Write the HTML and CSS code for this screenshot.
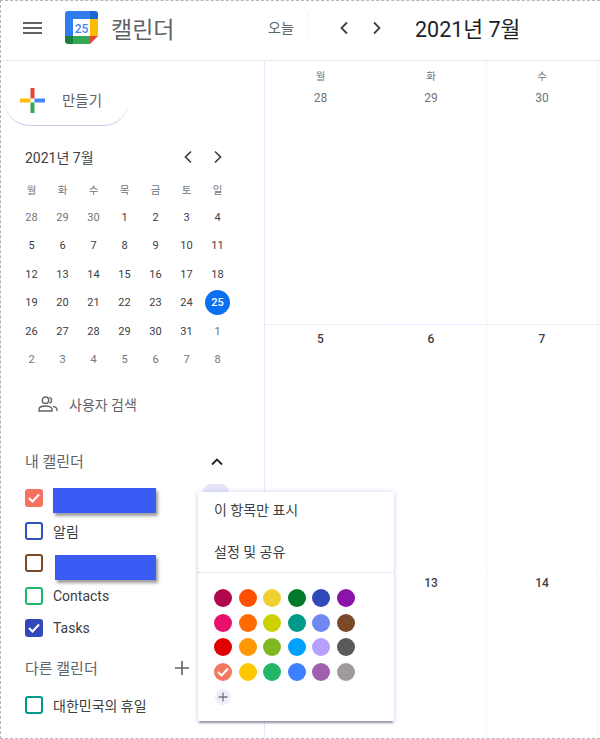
FILE: index.html
```html
<!DOCTYPE html>
<html lang="ko">
<head>
  <meta charset="utf-8">
  <title>캘린더</title>
  <link rel="stylesheet" href="styles.css">
</head>

<body>
  <div class="page">
    <header class="topbar">
      <svg class="menu-icon" viewBox="0 0 19 12"><path d="M0 1h19M0 6h19M0 11h19" stroke="#5f6368" stroke-width="2"/></svg>
      <svg class="logo" viewBox="0 0 33 33">
        <path d="M3 0h22v8H8v17H0V3a3 3 0 0 1 3-3z" fill="#2f7bf0"/>
        <path d="M25 0h5a3 3 0 0 1 3 3v5h-8z" fill="#1967d2"/>
        <path d="M25 8h8v17h-8z" fill="#fbbc04"/>
        <path d="M8 25h17v8H8z" fill="#34a853"/>
        <path d="M0 25h8v8H3a3 3 0 0 1-3-3z" fill="#188038"/>
        <path d="M25 25h8l-8 8z" fill="#ea4335"/>
        <path d="M8 8h17v17H8z" fill="#fff"/>
        <text x="16.5" y="21.5" class="logo-num">25</text>
      </svg>
      <span class="app-name">캘린더</span>
      <span class="today">오늘</span>
      <svg class="top-arrow" viewBox="0 0 10 14"><path d="M8 1.5 2.500 7 8 12.500" fill="none" stroke="#3c4043" stroke-width="1.8"/></svg>
      <svg class="top-arrow next" viewBox="0 0 10 14"><path d="M2 1.5 7.500 7 2 12.500" fill="none" stroke="#3c4043" stroke-width="1.8"/></svg>
      <span class="month-title">2021년 7월</span>
    </header>

    <div class="content">
      <aside class="sidebar">
        <button class="create-btn" type="button">
          <svg class="create-plus" viewBox="0 0 25 25">
            <path d="M10.5 0h4v10.500h-4z" fill="#ea4335"/>
            <path d="M14.5 10.5H25v4H14.500z" fill="#4285f4"/>
            <path d="M10.5 14.5h4V25h-4z" fill="#34a853"/>
            <path d="M0 10.5h10.500v4H0z" fill="#fbbc04"/>
          </svg>
          <span>만들기</span>
        </button>

        <div class="mini-head">
          <span class="mini-title">2021년 7월</span>
          <svg class="mini-arrow" viewBox="0 0 10 14"><path d="M8 1.5 2.500 7 8 12.500" fill="none" stroke="#3c4043" stroke-width="1.7"/></svg>
          <svg class="mini-arrow" viewBox="0 0 10 14"><path d="M2 1.5 7.500 7 2 12.500" fill="none" stroke="#3c4043" stroke-width="1.7"/></svg>
        </div>

        <div class="mini-grid">
          <span class="dow">월</span><span class="dow">화</span><span class="dow">수</span><span class="dow">목</span><span class="dow">금</span><span class="dow">토</span><span class="dow">일</span>
          <span class="off">28</span><span class="off">29</span><span class="off">30</span><span>1</span><span>2</span><span>3</span><span>4</span>
          <span>5</span><span>6</span><span>7</span><span>8</span><span>9</span><span>10</span><span>11</span>
          <span>12</span><span>13</span><span>14</span><span>15</span><span>16</span><span>17</span><span>18</span>
          <span>19</span><span>20</span><span>21</span><span>22</span><span>23</span><span>24</span><span class="selected"><b>25</b></span>
          <span>26</span><span>27</span><span>28</span><span>29</span><span>30</span><span>31</span><span class="off">1</span>
          <span class="off">2</span><span class="off">3</span><span class="off">4</span><span class="off">5</span><span class="off">6</span><span class="off">7</span><span class="off">8</span>
        </div>

        <div class="people-search">
          <svg class="people-icon" viewBox="0 0 20 16"><g fill="none" stroke="#5f6368" stroke-width="1.4"><circle cx="7.500" cy="4.200" r="3.200"/><path d="M1 15v-1.600C1 11.200 4 10 7.500 10s6.500 1.200 6.500 3.400V15z"/><path d="M11.500 1.200a3.200 3.200 0 0 1 0 6M15 10.400c2.300.5 4 1.500 4 3V15"/></g></svg>
          <span>사용자 검색</span>
        </div>

        <div class="section-head my-head">
          <span>내 캘린더</span>
          <svg class="collapse-icon" viewBox="0 0 12 8"><path d="M1 6.500 6 1.500l5 5" fill="none" stroke="#202124" stroke-width="1.8"/></svg>
        </div>

        <ul class="cal-list">
          <li><i class="check salmon"><svg viewBox="0 0 12 10"><path d="M1 5l3.500 3.500L11 1.500" class="tick"/></svg></i><span class="redacted"></span></li>
          <li><i class="check blue"></i>알림</li>
          <li><i class="check brown"></i><span class="redacted second"></span></li>
          <li><i class="check green"></i>Contacts</li>
          <li><i class="check indigo"><svg viewBox="0 0 12 10"><path d="M1 5l3.500 3.500L11 1.500" class="tick"/></svg></i>Tasks</li>
        </ul>

        <div class="section-head other-head">
          <span>다른 캘린더</span>
          <svg class="add-icon" viewBox="0 0 14 14"><path d="M7 0v14M0 7h14" stroke="#5f6368" stroke-width="1.600"/></svg>
        </div>

        <ul class="cal-list">
          <li><i class="check teal"></i>대한민국의 휴일</li>
        </ul>
      </aside>

      <main class="month">
        <div class="day first-row"><small>월</small>28</div>
        <div class="day first-row col-line"><small>화</small>29</div>
        <div class="day first-row col-line"><small>수</small>30</div>
        <div class="day first-row"></div>
        <div class="day strong">5</div>
        <div class="day strong col-line">6</div>
        <div class="day strong col-line">7</div>
        <div class="day"></div>
        <div class="day strong">12</div>
        <div class="day strong col-line">13</div>
        <div class="day strong col-line">14</div>
      </main>
    </div>

    <div class="popup-notch"></div>
    <div class="popup">
      <div class="popup-item first">이 항목만 표시</div>
      <div class="popup-item">설정 및 공유</div>
      <div class="swatches">
        <i style="background:#b0084f"></i><i style="background:#ff5000"></i><i style="background:#f0d030"></i><i style="background:#007a28"></i><i style="background:#3048b8"></i><i style="background:#8a14a8"></i>
        <i style="background:#e8106a"></i><i style="background:#ff6a00"></i><i style="background:#ccd000"></i><i style="background:#009a88"></i><i style="background:#7088f0"></i><i style="background:#7a4a28"></i>
        <i style="background:#e00000"></i><i style="background:#ff9800"></i><i style="background:#80b820"></i><i style="background:#00a0ff"></i><i style="background:#b8a0ff"></i><i style="background:#5a5a5a"></i>
        <i style="background:#f47860"><svg viewBox="0 0 12 10"><path d="M1 5l3.500 3.500L11 1.500" class="tick"/></svg></i><i style="background:#ffc800"></i><i style="background:#20b868"></i><i style="background:#3a80ff"></i><i style="background:#a060b0"></i><i style="background:#a09a9a"></i>
      </div>
      <svg class="custom-color" viewBox="0 0 16 16"><circle cx="8" cy="8" r="8" fill="#eeeffc"/><path d="M8 3.500v9M3.500 8h9" stroke="#70757a" stroke-width="1.300"/></svg>
    </div>
  </div>
</body>
</html>
```

FILE: styles.css
```css
* {
  box-sizing: border-box;
}

body {
  margin: 0;
  font-family: Roboto, "Noto Sans CJK KR", sans-serif;
  color: #3c4043;
  background-color: #fff;
}

.page {
  position: relative;
  width: 600px;
  height: 739px;
  overflow: hidden;
  border-top: 1px dashed #b5b5b5;
  border-left: 1px dashed #b5b5b5;
  border-bottom: 1px dashed #b5b5b5;
}

/* top bar */
.topbar {
  display: flex;
  align-items: center;
  height: 60px;
  padding-bottom: 6px;
  border-bottom: 1px dotted #cfd0f5;
}

.menu-icon {
  width: 19px;
  height: 12px;
  margin-left: 22px;
}

.logo {
  width: 33px;
  height: 33px;
  margin-left: 23px;
}

.logo-num {
  font-size: 12px;
  font-weight: 500;
  fill: #4285f4;
  text-anchor: middle;
}

.app-name {
  width: 70px;
  margin-left: 13px;
  font-size: 23px;
  color: #5f6368;
}

.today {
  width: 40px;
  height: 28px;
  margin-left: 87px;
  font-size: 14px;
  line-height: 28px;
  color: #5f6368;
  border-right: 1px dotted #d8f3f5;
}

.top-arrow {
  width: 10px;
  height: 14px;
  margin-left: 31px;
}

.top-arrow.next {
  margin-left: 23px;
}

.month-title {
  margin-left: 33px;
  font-size: 21.5px;
  color: #202124;
  white-space: nowrap;
}

.content {
  display: flex;
  height: 677px;
}

/* sidebar */
.sidebar {
  flex: none;
  width: 264px;
  border-right: 1px dotted #cfd0f5;
}

.create-btn {
  display: flex;
  align-items: center;
  width: 125px;
  height: 52px;
  margin: 13px 0 0 3px;
  padding: 0 0 0 16px;
  background: #fff;
  border: none;
  border-bottom: 1px solid #c9caee;
  border-radius: 26px;
  font-family: inherit;
  font-size: 14.5px;
  color: #5f6368;
}

.create-plus {
  width: 25px;
  height: 25px;
  margin: 2px 17px 0 0;
}

.mini-head {
  display: flex;
  align-items: center;
  height: 20px;
  margin-top: 21px;
  padding-left: 24px;
}

.mini-title {
  width: 158px;
  font-size: 14px;
  color: #3c4043;
}

.mini-arrow {
  width: 10px;
  height: 14px;
  margin-right: 20px;
}

.mini-grid {
  display: grid;
  grid-template-columns: repeat(7, 31px);
  grid-auto-rows: 28.4px;
  margin: 8px 0 0 15px;
  font-size: 11px;
  color: #3c4043;
}

.mini-grid span {
  display: flex;
  align-items: center;
  justify-content: center;
}

.mini-grid .dow {
  color: #70757a;
  font-size: 10.5px;
}

.mini-grid .off {
  color: #70757a;
}

.selected b {
  display: flex;
  align-items: center;
  justify-content: center;
  width: 25px;
  height: 25px;
  border-radius: 50%;
  background-color: #0a6ff0;
  color: #fff;
  font-weight: 500;
}

.people-search {
  display: flex;
  align-items: center;
  height: 30px;
  margin-top: 15px;
  padding-left: 37px;
  font-size: 14px;
  color: #5f6368;
}

.people-icon {
  width: 20px;
  height: 16px;
  margin-right: 11px;
}

.section-head {
  display: flex;
  align-items: center;
  justify-content: space-between;
  height: 20px;
  padding-left: 24px;
  font-size: 15px;
  color: #5f6368;
}

.my-head {
  margin-top: 32px;
  padding-right: 41px;
}

.collapse-icon {
  width: 12px;
  height: 8px;
  margin-top: 3px;
}

.other-head {
  margin-top: 13px;
  padding-right: 75px;
}

.add-icon {
  width: 14px;
  height: 14px;
}

.cal-list {
  margin: 0;
  padding: 11px 0 0 24px;
  list-style: none;
  font-size: 14px;
  color: #3c4043;
}

.cal-list li {
  display: flex;
  align-items: center;
  height: 32.6px;
}

.check {
  display: flex;
  align-items: center;
  justify-content: center;
  flex: none;
  width: 18px;
  height: 18px;
  margin-right: 10px;
  border: 2px solid;
  border-radius: 3px;
}

.check svg {
  width: 12px;
  height: 10px;
}

.tick {
  fill: none;
  stroke: #fff;
  stroke-width: 2;
}

.salmon { border-color: #f4725f; background-color: #f4725f; }
.blue { border-color: #3050c0; }
.brown { border-color: #7a4a28; }
.green { border-color: #20b868; }
.indigo { border-color: #3048b8; background-color: #3048b8; }
.teal { border-color: #009a88; }

.redacted {
  width: 103px;
  height: 25px;
  margin-top: 4px;
  background-color: #3b5bf5;
  box-shadow: 2px 3px 3px rgba(60, 60, 60, 0.5);
}

.redacted.second {
  width: 101px;
  margin: 8px 0 0 2px;
}

/* month view */
.month {
  flex: 1;
  display: grid;
  grid-template-columns: 111px 111px 111px 1fr;
  grid-template-rows: 264px 244px 1fr;
}

.day {
  padding-top: 4px;
  text-align: center;
  font-size: 12px;
  line-height: 20px;
  color: #70757a;
}

.first-row {
  padding-top: 8px;
  border-bottom: 1px dotted #dcdcf5;
}

.col-line {
  border-right: 1px dotted #d8f3f5;
}

.day small {
  display: block;
  margin-bottom: 3px;
  font-size: 10.5px;
  line-height: 16px;
}

.day.strong {
  color: #3c4043;
  font-weight: 500;
}

/* colour popup */
.popup-notch {
  position: absolute;
  left: 202px;
  top: 483px;
  width: 26px;
  height: 8px;
  border-radius: 13px 13px 0 0;
  background-color: #e4e5f8;
}

.popup {
  position: absolute;
  left: 197px;
  top: 491px;
  width: 196px;
  height: 229px;
  background-color: #fff;
  box-shadow: 0 3px 2px -1px rgba(90, 90, 110, 0.6), 0 0 5px rgba(160, 160, 235, 0.45);
  font-size: 14px;
  color: #3c4043;
}

.popup-item {
  height: 38px;
  padding: 9px 0 0 16px;
  line-height: 18px;
}

.popup-item.first {
  height: 42px;
}

.swatches {
  display: grid;
  grid-template-columns: repeat(6, 18px);
  grid-auto-rows: 18px;
  gap: 6.5px;
  padding: 16px 0 0 16px;
  border-top: 1px dotted #cfd0f5;
}

.swatches i {
  display: flex;
  align-items: center;
  justify-content: center;
  border-radius: 50%;
}

.swatches svg {
  width: 12px;
  height: 10px;
}

.custom-color {
  display: block;
  width: 16px;
  height: 16px;
  margin: 8px 0 0 17px;
}
```
